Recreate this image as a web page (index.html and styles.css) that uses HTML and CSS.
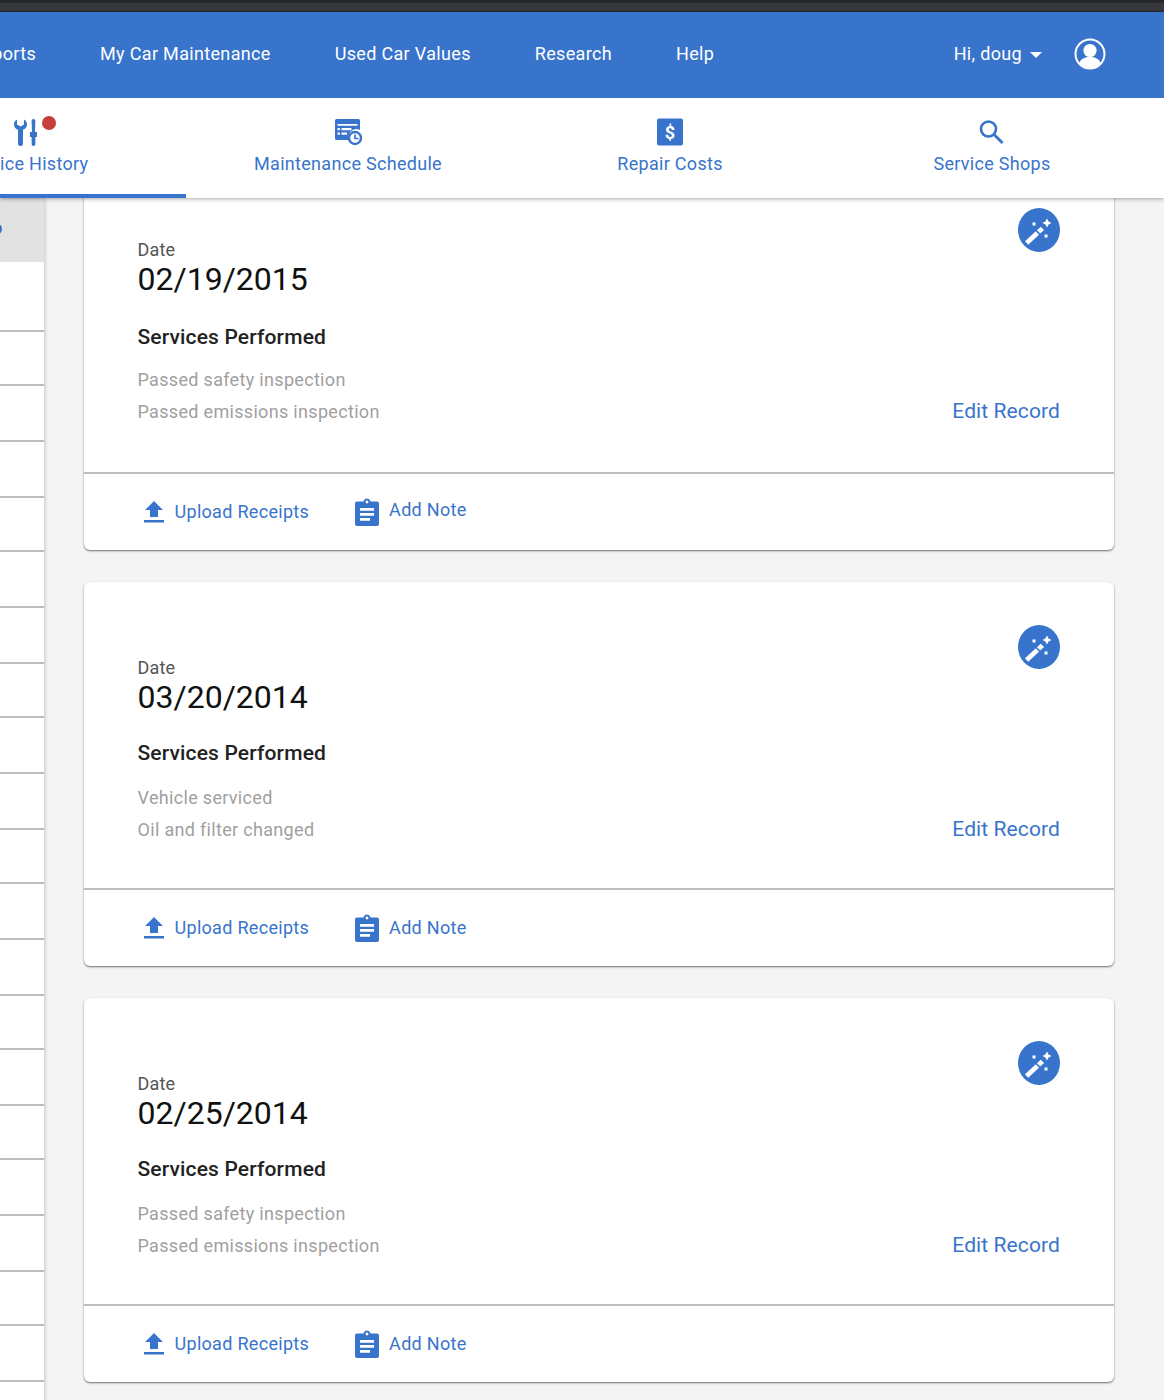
FILE: index.html
```html
<!DOCTYPE html>
<html lang="en">
<head>
<meta charset="utf-8">
<title>Service History</title>
<link rel="stylesheet" href="styles.css">
</head>
<body>
<div class="chrome"></div>
<header class="header">
  <nav class="topnav">
    <div class="links">
      <a class="link">Reports</a>
      <a class="link">My Car Maintenance</a>
      <a class="link">Used Car Values</a>
      <a class="link">Research</a>
      <a class="link">Help</a>
    </div>
    <div class="user">
      <span class="hi">Hi, doug</span>
      <span class="caret"></span>
      <svg class="avatar" viewBox="0 0 32 32"><circle cx="16" cy="16" r="14.5" fill="none" stroke="#fff" stroke-width="2"/><circle cx="16" cy="12.5" r="6.6" fill="#fff"/><path d="M5.5 25.2c1.2-4.4 5.500-6.200 10.500-6.200s9.300 1.800 10.500 6.200C23.800 28.600 20 30 16 30S8.200 28.600 5.500 25.200z" fill="#fff"/></svg>
    </div>
  </nav>
  <div class="tabs">
    <div class="tab active">
      <span class="tab-icon">
        <svg class="ic" viewBox="0 0 28 28"><path fill="#3874cb" d="M5 1.500C2.800 2.500 2 4.500 2 6.500 2 9 3.500 11 6 11.800V25.500a2.500 2.500 0 0 0 5 0V11.800C13.500 11 15 9 15 6.500 15 4.500 14.200 2.500 12 1.500V6.500L8.500 8.500 5 6.500z"/><path fill="#3874cb" d="M19.600 3a1.900 1.900 0 0 1 3.800 0L23 14H25V19H23.400V26a1.900 1.900 0 0 1-3.800 0V19H18V14H20z"/></svg>
        <span class="dot"></span>
      </span>
      <span class="tab-label">Service History</span>
    </div>
    <div class="tab">
      <span class="tab-icon">
        <svg class="ic" viewBox="0 0 28 28"><path fill="#3874cb" d="M2.500 1h22A1.500 1.500 0 0 1 26 2.500V12a8 8 0 0 0-11 10H2.500A1.500 1.500 0 0 1 1 20.500V2.500A1.500 1.500 0 0 1 2.500 1z"/><path fill="#fff" d="M3.500 6h20v1.800H3.500zM3.500 10h2.400v2.200H3.500zM7.500 10h10v2.200h-10zM3.500 14.500h2.400v2.200H3.500zM7.500 14.500h5.500v2.200H7.500z"/><circle cx="21" cy="20" r="6" fill="#fff" stroke="#3874cb" stroke-width="2.400"/><path d="M21 16.600v3.900h3.400" fill="none" stroke="#3874cb" stroke-width="1.700"/></svg>
      </span>
      <span class="tab-label">Maintenance Schedule</span>
    </div>
    <div class="tab">
      <span class="tab-icon">
        <svg class="ic" viewBox="0 0 28 28"><rect x="1" y="0.500" width="26" height="27" rx="2" fill="#3874cb"/><text class="dollar" x="14" y="20.500" text-anchor="middle">$</text></svg>
      </span>
      <span class="tab-label">Repair Costs</span>
    </div>
    <div class="tab">
      <span class="tab-icon">
        <svg class="ic" viewBox="0 0 28 28"><circle cx="10.500" cy="11" r="7.500" fill="none" stroke="#3874cb" stroke-width="2.600"/><path d="M16 16.500l8.500 8.500" stroke="#3874cb" stroke-width="2.800" fill="none"/></svg>
      </span>
      <span class="tab-label">Service Shops</span>
    </div>
  </div>
</header>

<main class="main">
  <aside class="side">
    <div class="side-sel"><span class="side-mark"></span></div>
    <div class="side-first"></div>
    <div class="side-row short"></div><div class="side-row"></div><div class="side-row"></div>
    <div class="side-row short"></div><div class="side-row"></div><div class="side-row"></div>
    <div class="side-row short"></div><div class="side-row"></div><div class="side-row"></div>
    <div class="side-row short"></div><div class="side-row"></div><div class="side-row"></div>
    <div class="side-row short"></div><div class="side-row"></div>
    <div class="side-row short"></div><div class="side-row"></div><div class="side-row"></div>
    <div class="side-row short"></div><div class="side-row"></div>
  </aside>
  <section class="records">
    <article class="card card-top">
      <div class="body">
        <span class="wand"><svg viewBox="0 0 42 44"><path d="M7 33.300L17.800 23.300l3.200 3.400L10.200 36.800z" fill="#fff"/><path d="M19 22.200l3.800-3.500 3.200 3.400-3.800 3.500z" fill="#fff"/><path d="M29 10.500l1.600 2.900 2.900 1.600-2.900 1.600L29 19.500l-1.600-2.900L24.500 15l2.900-1.600z" fill="#fff"/><path d="M14.500 14.500h3v3h-3zM26.500 26.500h3v3h-3z" fill="#fff"/></svg></span>
        <div class="lbl">Date</div>
        <div class="date">02/19/2015</div>
        <h3 class="sp">Services Performed</h3>
        <p class="item first">Passed safety inspection</p>
        <p class="item">Passed emissions inspection</p>
        <a class="edit">Edit Record</a>
      </div>
      <div class="foot">
        <a class="act"><svg class="up" viewBox="0 0 20 24"><path d="M10 1l9 9h-5v7H6v-7H1zM0 20h20v2.400H0z" fill="#3874cb"/></svg>Upload Receipts</a>
        <a class="act note"><svg class="cl" viewBox="0 0 24 28"><path fill="#3874cb" d="M2 3.500h6.500C9 1.500 10.300.5 12 .5s3 1 3.500 3H22a2 2 0 0 1 2 2V26a2 2 0 0 1-2 2H2a2 2 0 0 1-2-2V5.500a2 2 0 0 1 2-2z"/><circle cx="12" cy="4" r="1.400" fill="#fff"/><path fill="#fff" d="M5 10h14v2.800H5zM5 15h14v2.800H5zM5 20h10v2.800H5z"/></svg>Add Note</a>
      </div>
    </article>
    <article class="card">
      <div class="body">
        <span class="wand"><svg viewBox="0 0 42 44"><path d="M7 33.300L17.800 23.300l3.200 3.400L10.200 36.800z" fill="#fff"/><path d="M19 22.200l3.800-3.500 3.200 3.400-3.800 3.500z" fill="#fff"/><path d="M29 10.500l1.600 2.900 2.900 1.600-2.900 1.600L29 19.500l-1.600-2.900L24.500 15l2.900-1.600z" fill="#fff"/><path d="M14.500 14.500h3v3h-3zM26.500 26.500h3v3h-3z" fill="#fff"/></svg></span>
        <div class="lbl">Date</div>
        <div class="date">03/20/2014</div>
        <h3 class="sp">Services Performed</h3>
        <p class="item first">Vehicle serviced</p>
        <p class="item">Oil and filter changed</p>
        <a class="edit">Edit Record</a>
      </div>
      <div class="foot">
        <a class="act"><svg class="up" viewBox="0 0 20 24"><path d="M10 1l9 9h-5v7H6v-7H1zM0 20h20v2.400H0z" fill="#3874cb"/></svg>Upload Receipts</a>
        <a class="act note"><svg class="cl" viewBox="0 0 24 28"><path fill="#3874cb" d="M2 3.500h6.500C9 1.500 10.300.5 12 .5s3 1 3.500 3H22a2 2 0 0 1 2 2V26a2 2 0 0 1-2 2H2a2 2 0 0 1-2-2V5.500a2 2 0 0 1 2-2z"/><circle cx="12" cy="4" r="1.400" fill="#fff"/><path fill="#fff" d="M5 10h14v2.800H5zM5 15h14v2.800H5zM5 20h10v2.800H5z"/></svg>Add Note</a>
      </div>
    </article>
    <article class="card">
      <div class="body">
        <span class="wand"><svg viewBox="0 0 42 44"><path d="M7 33.300L17.800 23.300l3.200 3.400L10.200 36.800z" fill="#fff"/><path d="M19 22.200l3.800-3.500 3.200 3.400-3.800 3.500z" fill="#fff"/><path d="M29 10.500l1.600 2.900 2.900 1.600-2.900 1.600L29 19.500l-1.600-2.900L24.500 15l2.900-1.600z" fill="#fff"/><path d="M14.500 14.500h3v3h-3zM26.500 26.500h3v3h-3z" fill="#fff"/></svg></span>
        <div class="lbl">Date</div>
        <div class="date">02/25/2014</div>
        <h3 class="sp">Services Performed</h3>
        <p class="item first">Passed safety inspection</p>
        <p class="item">Passed emissions inspection</p>
        <a class="edit">Edit Record</a>
      </div>
      <div class="foot">
        <a class="act"><svg class="up" viewBox="0 0 20 24"><path d="M10 1l9 9h-5v7H6v-7H1zM0 20h20v2.400H0z" fill="#3874cb"/></svg>Upload Receipts</a>
        <a class="act note"><svg class="cl" viewBox="0 0 24 28"><path fill="#3874cb" d="M2 3.500h6.500C9 1.500 10.300.5 12 .5s3 1 3.500 3H22a2 2 0 0 1 2 2V26a2 2 0 0 1-2 2H2a2 2 0 0 1-2-2V5.500a2 2 0 0 1 2-2z"/><circle cx="12" cy="4" r="1.400" fill="#fff"/><path fill="#fff" d="M5 10h14v2.800H5zM5 15h14v2.800H5zM5 20h10v2.800H5z"/></svg>Add Note</a>
      </div>
    </article>
  </section>
</main>
</body>
</html>
```
FILE: styles.css
```css
* { box-sizing: border-box; }
html, body { margin: 0; padding: 0; height: 1400px; overflow: hidden; }
body { background: #f4f4f4; font-family: Roboto, "Liberation Sans", sans-serif; color: #222; }

.chrome { height: 12px; background: linear-gradient(#232428 0, #232428 2px, #36383d 3px, #36383d 10px, #26272b 12px); }

.header { position: relative; z-index: 5; background: #fff; box-shadow: 0 1px 4px rgba(0,0,0,.35); }
.topnav { height: 86px; padding-bottom: 2px; background: #3874cb; display: flex; align-items: center; justify-content: space-between; color: #fff; }
.links { display: flex; gap: 64px; margin-left: -29px; }
.link { font-size: 18px; line-height: 24px; letter-spacing: .33px; white-space: nowrap; }
.user { display: flex; align-items: center; margin-right: 58px; }
.hi { font-size: 18px; line-height: 24px; letter-spacing: .33px; }
.caret { width: 0; height: 0; border-left: 6px solid transparent; border-right: 6px solid transparent; border-top: 6px solid #fff; margin: 2px 0 0 8px; }
.avatar { width: 32px; height: 32px; margin-left: 32px; display: block; }

.tabs { display: flex; height: 100px; margin-left: -136px; }
.tab { width: 322px; flex: none; height: 100px; display: flex; flex-direction: column; align-items: center; padding: 20px 0 0 2px; color: #3874cb; position: relative; }
.tab.active { border-bottom: 4px solid #3874cb; }
.tab-icon { position: relative; height: 28px; display: block; }
.ic { width: 28px; height: 28px; display: block; }
.dot { position: absolute; left: 30px; top: -2px; width: 14px; height: 14px; border-radius: 50%; background: #c5403a; }
.dollar { font: 700 18px Roboto, sans-serif; fill: #fff; }
.tab-label { font-size: 18px; line-height: 24px; letter-spacing: .3px; margin-top: 6px; white-space: nowrap; }

.main { display: flex; height: 1202px; overflow: hidden; align-items: flex-start; }
.side { width: 45px; flex: none; background: #fff; border-right: 1px solid #d8d8d8; box-shadow: 1px 0 3px rgba(0,0,0,.12); height: 1202px; }
.side-sel { height: 64px; background: #e2e2e2; position: relative; overflow: hidden; }
.side-mark { position: absolute; left: -6px; top: 26px; width: 8px; height: 10px; border-radius: 50%; background: #3874cb; }
.side-first { height: 70px; border-bottom: 2px solid #bdbdbd; }
.side-row { height: 56px; border-bottom: 2px solid #bdbdbd; }
.side-row.short { height: 54px; }

.records { width: 1030px; margin: -32px 0 0 39px; display: flex; flex-direction: column; gap: 32px; flex: none; }
.card { height: 384px; background: #fff; border-radius: 6px; box-shadow: 0 1px 2px rgba(0,0,0,.55); display: flex; flex-direction: column; }
.body { position: relative; height: 308px; flex: none; padding: 76px 54px 0 53.5px; border-bottom: 2px solid #bdbdbd; }
.wand { position: absolute; right: 54px; top: 43px; width: 42px; height: 44px; border-radius: 50%; background: #3874cb; }
.wand svg { width: 42px; height: 44px; display: block; }
.lbl { font-size: 18px; line-height: 20px; letter-spacing: .2px; color: #555; }
.date { font-size: 32px; line-height: 36px; margin-top: 1px; color: #111; }
.sp { font-size: 21px; font-weight: 500; line-height: 26px; letter-spacing: .15px; margin: 25px 0 0; color: #222; }
.item { font-size: 18px; line-height: 24px; color: #a0a0a0; margin: 8px 0 0; letter-spacing: .32px; }
.item.first { margin-top: 20px; }
.edit { position: absolute; right: 54px; top: 233px; font-size: 21px; line-height: 28px; letter-spacing: .1px; color: #3874cb; }

.foot { flex: 1; display: flex; align-items: flex-start; padding: 26px 0 0 60px; }
.act { display: flex; align-items: center; font-size: 18px; line-height: 24px; letter-spacing: .3px; color: #3874cb; }
.note { margin-left: 46px; position: relative; top: -2px; }
.up { width: 20px; height: 24px; margin-right: 10.5px; display: block; }
.cl { width: 24px; height: 28px; margin-right: 10px; display: block; }

.card-top .body { padding-top: 74px; }
.card-top .sp { margin-top: 27px; }
.card-top .item.first { margin-top: 18px; }
.card-top .wand { top: 42px; }
.card-top .edit { top: 231px; }
.card-top .note { top: -4px; }
.card-top .cl { position: relative; top: 2px; }
```
